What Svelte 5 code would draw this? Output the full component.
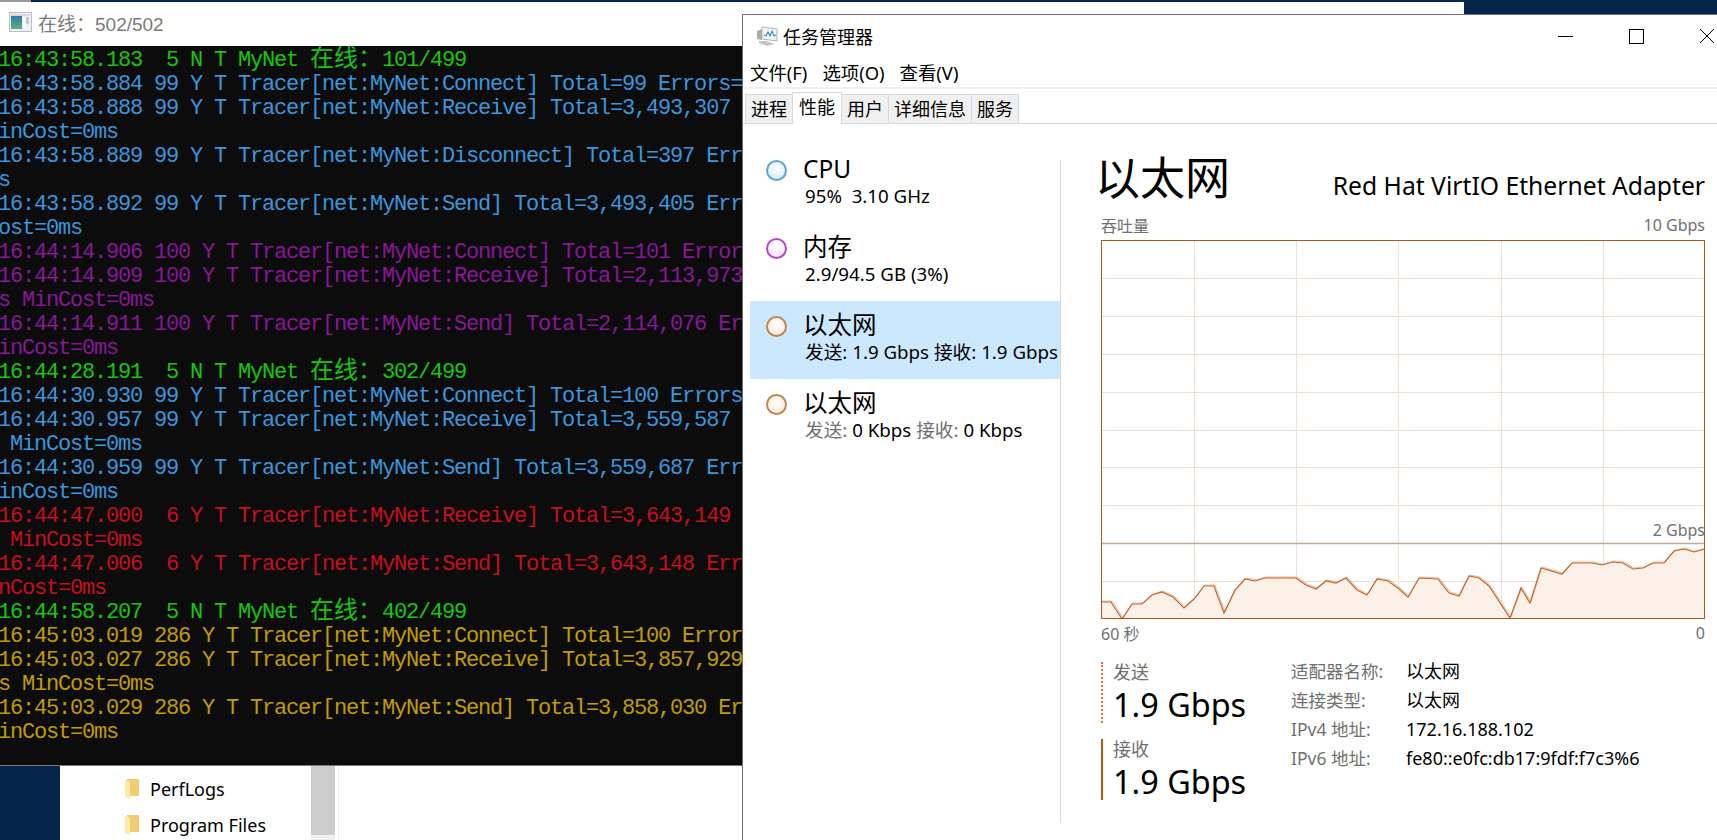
<script lang="ts">
	type Line = { c: string; t: string; cn?: string };

	const lines: Line[] = [
		{ c: 'green', t: '16:43:58.183  5 N T MyNet ', cn: '101/499' },
		{ c: 'blue', t: '16:43:58.884 99 Y T Tracer[net:MyNet:Connect] Total=99 Errors=' },
		{ c: 'blue', t: '16:43:58.888 99 Y T Tracer[net:MyNet:Receive] Total=3,493,307' },
		{ c: 'blue', t: 'inCost=0ms' },
		{ c: 'blue', t: '16:43:58.889 99 Y T Tracer[net:MyNet:Disconnect] Total=397 Err' },
		{ c: 'blue', t: 's' },
		{ c: 'blue', t: '16:43:58.892 99 Y T Tracer[net:MyNet:Send] Total=3,493,405 Err' },
		{ c: 'blue', t: 'ost=0ms' },
		{ c: 'purple', t: '16:44:14.906 100 Y T Tracer[net:MyNet:Connect] Total=101 Error' },
		{ c: 'purple', t: '16:44:14.909 100 Y T Tracer[net:MyNet:Receive] Total=2,113,973' },
		{ c: 'purple', t: 's MinCost=0ms' },
		{ c: 'purple', t: '16:44:14.911 100 Y T Tracer[net:MyNet:Send] Total=2,114,076 Er' },
		{ c: 'purple', t: 'inCost=0ms' },
		{ c: 'green', t: '16:44:28.191  5 N T MyNet ', cn: '302/499' },
		{ c: 'blue', t: '16:44:30.930 99 Y T Tracer[net:MyNet:Connect] Total=100 Errors' },
		{ c: 'blue', t: '16:44:30.957 99 Y T Tracer[net:MyNet:Receive] Total=3,559,587' },
		{ c: 'blue', t: ' MinCost=0ms' },
		{ c: 'blue', t: '16:44:30.959 99 Y T Tracer[net:MyNet:Send] Total=3,559,687 Err' },
		{ c: 'blue', t: 'inCost=0ms' },
		{ c: 'red', t: '16:44:47.000  6 Y T Tracer[net:MyNet:Receive] Total=3,643,149' },
		{ c: 'red', t: ' MinCost=0ms' },
		{ c: 'red', t: '16:44:47.006  6 Y T Tracer[net:MyNet:Send] Total=3,643,148 Err' },
		{ c: 'red', t: 'nCost=0ms' },
		{ c: 'green', t: '16:44:58.207  5 N T MyNet ', cn: '402/499' },
		{ c: 'yellow', t: '16:45:03.019 286 Y T Tracer[net:MyNet:Connect] Total=100 Error' },
		{ c: 'yellow', t: '16:45:03.027 286 Y T Tracer[net:MyNet:Receive] Total=3,857,929' },
		{ c: 'yellow', t: 's MinCost=0ms' },
		{ c: 'yellow', t: '16:45:03.029 286 Y T Tracer[net:MyNet:Send] Total=3,858,030 Er' },
		{ c: 'yellow', t: 'inCost=0ms' }
	];

	const tabs = ['进程', '性能', '用户', '详细信息', '服务'];

	const gridX = [93, 195, 297, 400, 502];
	const gridY = [38, 76, 114, 152, 190, 227, 265, 341];

	// samples read off the graph, x 0-604, y 0-379
	const samples = [
		[0, 362], [10, 362], [21, 379], [31, 364], [41, 364], [51, 355], [61, 352], [72, 357], [83, 368],
		[93, 359], [103, 346], [113, 346], [123, 373], [134, 350], [144, 339], [154, 341], [164, 338],
		[195, 338], [205, 345], [215, 349], [225, 341], [235, 343], [245, 338], [256, 350], [266, 355],
		[276, 339], [287, 341], [297, 348], [307, 357], [318, 338], [337, 339], [348, 353], [358, 356],
		[368, 336], [378, 338], [388, 346], [409, 378], [420, 348], [429, 363], [440, 328], [461, 334],
		[471, 323], [491, 323], [501, 325], [512, 322], [522, 323], [532, 329], [542, 328], [552, 323],
		[563, 323], [573, 311], [583, 309], [593, 312], [604, 309]
	];

	const line = samples.map((p) => p.join(',')).join(' ');
	const send = samples.map((p) => `${p[0] + 1},${p[1] - 1}`).join(' ');
	const area = `0,379 ${line} 604,379`;
</script>

<div class="desktop">
	<div class="strip"></div>
	<div class="console">
		<div class="con-title">
			<svg class="con-icon" width="23" height="20" viewBox="0 0 23 20">
				<defs>
					<linearGradient id="screen" x1="0" y1="0" x2="0" y2="1">
						<stop offset="0" stop-color="#2f7fa8" />
						<stop offset="1" stop-color="#5fae7c" />
					</linearGradient>
				</defs>
				<rect x="0.5" y="0.5" width="22" height="19" fill="#eef0f1" stroke="#b9bec2" />
				<rect x="2" y="4" width="11" height="13" fill="url(#screen)" />
				<rect x="2" y="2" width="19" height="2" fill="#d5d9dc" />
				<rect x="14" y="5" width="2" height="12" fill="#fff" />
				<rect x="17" y="5" width="3" height="7" fill="#c9cdd0" />
			</svg>
			<span>在线：502/502</span>
		</div>
		<div class="log">
			{#each lines as l}
				<div class="line {l.c}">{l.t}{#if l.cn}<span class="cn">在线：</span>{l.cn}{/if}</div>
			{/each}
		</div>
	</div>

	<div class="explorer">
		<div class="tree">
			<div class="folder">
				<svg width="16" height="22" viewBox="0 0 16 22"><path d="M3 1 H15 V18 H3 Z" fill="#f0cd70" /><path d="M1 2 L6 4 V21 L1 19 Z" fill="#fdeaa6" /></svg>
				<span>PerfLogs</span>
			</div>
			<div class="folder">
				<svg width="16" height="22" viewBox="0 0 16 22"><path d="M3 1 H15 V18 H3 Z" fill="#f0cd70" /><path d="M1 2 L6 4 V21 L1 19 Z" fill="#fdeaa6" /></svg>
				<span>Program Files</span>
			</div>
		</div>
		<div class="scrollbar"><div class="thumb"></div></div>
		<div class="pane"></div>
	</div>

	<div class="taskmgr">
		<div class="tm-title">
			<svg class="tm-icon" width="22" height="20" viewBox="0 0 22 20">
				<path d="M1 5 L6 3 V14 L1 13 Z" fill="#a9adb0" />
				<path d="M6 1 L21 3 V15 L6 13 Z" fill="#f2f6f9" stroke="#aab2b7" />
				<path d="M8 9 L10 10 L12 6 L14 10 L16 5 L18 10 L20 9" fill="none" stroke="#3f8fd0" stroke-width="1.2" />
				<path d="M3 15 L10 15 L19 18 L11 20 L3 17 Z" fill="#c3c6c8" />
			</svg>
			<span class="tm-name">任务管理器</span>
			<div class="controls">
				<svg width="16" height="16" viewBox="0 0 16 16"><path d="M1 8.5 H16" stroke="#000" /></svg>
				<svg width="16" height="16" viewBox="0 0 16 16"><rect x="1.5" y="1.5" width="14" height="14" fill="none" stroke="#000" /></svg>
				<svg width="16" height="16" viewBox="0 0 16 16"><path d="M1 1 L15 15 M15 1 L1 15" stroke="#000" fill="none" /></svg>
			</div>
		</div>

		<div class="menu">
			<span>文件(F)</span>
			<span>选项(O)</span>
			<span>查看(V)</span>
		</div>

		<div class="tabs">
			{#each tabs as tab}
				<div class="tab" class:active={tab === '性能'}>{tab}</div>
			{/each}
		</div>

		<div class="perf">
			<div class="side">
				<div class="item">
					<i class="dot cpu"></i>
					<div>
						<div class="item-name">CPU</div>
						<div class="item-sub">95%&nbsp; 3.10 GHz</div>
					</div>
				</div>
				<div class="item">
					<i class="dot mem"></i>
					<div>
						<div class="item-name">内存</div>
						<div class="item-sub">2.9/94.5 GB (3%)</div>
					</div>
				</div>
				<div class="item selected">
					<i class="dot net"></i>
					<div>
						<div class="item-name">以太网</div>
						<div class="item-sub">发送: 1.9 Gbps 接收: 1.9 Gbps</div>
					</div>
				</div>
				<div class="item">
					<i class="dot net"></i>
					<div>
						<div class="item-name">以太网</div>
						<div class="item-sub"><span class="muted">发送:</span> 0 Kbps <span class="muted">接收:</span> 0 Kbps</div>
					</div>
				</div>
			</div>

			<div class="divider"></div>

			<div class="main">
				<div class="head">
					<h1>以太网</h1>
					<div class="adapter">Red Hat VirtIO Ethernet Adapter</div>
				</div>
				<div class="scale">
					<span>吞吐量</span>
					<span>10 Gbps</span>
				</div>
				<div class="graph">
					<svg width="604" height="379" viewBox="0 0 604 379">
						{#each gridX as x}
							<line x1={x + 0.5} y1="0" x2={x + 0.5} y2="379" stroke="#eee0d4" />
						{/each}
						{#each gridY as y}
							<line x1="0" y1={y + 0.5} x2="604" y2={y + 0.5} stroke="#eee0d4" />
						{/each}
						<polygon points={area} fill="#fbf1e8" />
						<line x1="0" y1="303.5" x2="604" y2="303.5" stroke="#c9a68a" stroke-width="1.5" />
						<polyline points={send} fill="none" stroke="#eeb88f" />
						<polyline points={line} fill="none" stroke="#c4642e" stroke-width="1.2" />
					</svg>
					<span class="limit">2 Gbps</span>
				</div>
				<div class="scale axis">
					<span>60 秒</span>
					<span>0</span>
				</div>

				<div class="stats">
					<div class="rates">
						<div class="rate dotted">
							<div class="rate-label">发送</div>
							<div class="rate-value">1.9 Gbps</div>
						</div>
						<div class="rate solid">
							<div class="rate-label">接收</div>
							<div class="rate-value">1.9 Gbps</div>
						</div>
					</div>
					<div class="details">
						<span class="k">适配器名称:</span><span>以太网</span>
						<span class="k">连接类型:</span><span>以太网</span>
						<span class="k">IPv4 地址:</span><span>172.16.188.102</span>
						<span class="k">IPv6 地址:</span><span>fe80::e0fc:db17:9fdf:f7c3%6</span>
					</div>
				</div>
			</div>
		</div>
	</div>
</div>

<style>
	:global(body) {
		margin: 0;
		background: #05264a;
	}

	.desktop {
		position: relative;
		width: 1717px;
		height: 840px;
		overflow: hidden;
		background: #05264a;
		font-family: 'Noto Sans', 'Noto Sans CJK SC', sans-serif;
		color: #000;
	}

	.strip {
		position: absolute;
		left: 0;
		top: 0;
		width: 31px;
		height: 2px;
		background: #9a9a9a;
	}

	/* console window */
	.console {
		position: absolute;
		left: 0;
		top: 2px;
		width: 1464px;
		height: 764px;
		background: #fff;
		box-sizing: border-box;
		border-bottom: 1px solid #777;
	}

	.con-title {
		display: flex;
		align-items: center;
		gap: 6px;
		height: 44px;
		padding: 0 0 4px 9px;
		box-sizing: border-box;
		font-family: 'Liberation Sans', 'Noto Sans CJK SC', sans-serif;
		font-size: 19px;
		color: #7a7a7a;
	}

	.log {
		height: 719px;
		background: #0c0c0c;
		padding-top: 3px;
		box-sizing: border-box;
		font-family: 'Liberation Mono', 'Noto Sans CJK SC', monospace;
		font-size: 22px;
		letter-spacing: -1.2px;
		overflow: hidden;
	}

	.line {
		height: 24px;
		line-height: 24px;
		margin-left: -2px;
		white-space: pre;
	}

	.cn {
		font-family: 'Noto Sans CJK SC', sans-serif;
		font-size: 24px;
		line-height: 0;
		letter-spacing: 0;
	}

	.green { color: #16c60c; }
	.blue { color: #3a96dd; }
	.purple { color: #881798; }
	.red { color: #c50f1f; }
	.yellow { color: #c19c00; }

	/* explorer behind the console */
	.explorer {
		position: absolute;
		left: 60px;
		top: 766px;
		right: 0;
		height: 74px;
		display: flex;
		background: #fff;
	}

	.tree {
		width: 251px;
		padding: 5px 0 0 64px;
		box-sizing: border-box;
		font-size: 18px;
	}

	.folder {
		display: flex;
		align-items: center;
		gap: 10px;
		height: 36px;
	}

	.scrollbar {
		width: 24px;
		background: #f0f0f0;
	}

	.thumb {
		height: 69px;
		background: #cdcdcd;
	}

	.pane {
		margin-left: 3px;
		width: 1px;
		background: #eee;
	}

	/* task manager */
	.taskmgr {
		position: absolute;
		left: 742px;
		top: 14px;
		width: 975px;
		height: 826px;
		background: #fff;
		box-sizing: border-box;
		border: 1px solid #707070;
		border-width: 1px 0 0 1px;
	}

	.tm-title {
		display: flex;
		align-items: center;
		height: 41px;
		padding-left: 13px;
	}

	.tm-icon {
		margin-right: 5px;
	}

	.tm-name {
		font-size: 18px;
	}

	.controls {
		margin-left: auto;
		display: flex;
		gap: 55px;
		padding-right: 2px;
	}

	.menu {
		display: flex;
		align-items: center;
		gap: 15px;
		height: 31px;
		padding-left: 7px;
		font-size: 18.4px;
		border-bottom: 2px solid #f0f0f0;
		white-space: nowrap;
	}

	.tabs {
		display: flex;
		align-items: flex-end;
		height: 35px;
		padding-left: 2px;
		box-sizing: border-box;
		border-bottom: 1px solid #d9d9d9;
	}

	.tab {
		height: 29px;
		line-height: 28px;
		padding: 0 5px;
		font-size: 18px;
		background: #f0f0f0;
		border: 1px solid #d9d9d9;
		border-bottom: none;
		box-sizing: border-box;
		margin-right: -1px;
		white-space: nowrap;
	}

	.tab.active {
		height: 32px;
		line-height: 29px;
		background: #fff;
		margin-bottom: -1px;
		padding: 0 6px;
		position: relative;
	}

	.perf {
		display: flex;
		height: 702px;
	}

	.side {
		width: 310px;
		margin-left: 7px;
		padding-top: 21px;
	}

	.item {
		display: flex;
		align-items: flex-start;
		height: 78px;
		padding: 9px 0 0 16px;
		box-sizing: border-box;
		white-space: nowrap;
	}

	.item.selected {
		background: #cce8ff;
	}

	.item-name {
		font-size: 24.5px;
		line-height: 30px;
	}

	.item-sub {
		font-size: 18.7px;
		line-height: 24px;
		margin-left: 2px;
	}

	.muted {
		color: #707070;
	}

	.dot {
		display: block;
		width: 21px;
		height: 21px;
		margin: 6px 16px 0 0;
		border-radius: 50%;
		box-sizing: border-box;
		border: 2px solid;
		flex: none;
	}

	.dot.cpu {
		border-color: #5fa5d2;
		background: radial-gradient(circle at 50% 35%, #fff, #d3e6f2);
	}

	.dot.mem {
		border-color: #a94fc9;
		background: radial-gradient(circle at 50% 35%, #fff, #f1dcf8);
	}

	.dot.net {
		border-color: #c0864f;
		background: radial-gradient(circle at 50% 35%, #fff, #fbe6d4);
	}

	.divider {
		width: 1px;
		margin: 36px 0 3px;
		background: #d9d9d9;
	}

	.main {
		width: 604px;
		margin-left: 40px;
	}

	.head {
		display: flex;
		align-items: flex-end;
		justify-content: space-between;
		height: 76px;
		margin-top: 13px;
		white-space: nowrap;
	}

	h1 {
		margin: 0 0 5px -6px;
		font-size: 45px;
		font-weight: 400;
		line-height: 60px;
	}

	.adapter {
		font-size: 24.7px;
		line-height: 34px;
		margin-bottom: 10px;
	}

	.scale {
		display: flex;
		justify-content: space-between;
		align-items: center;
		height: 24px;
		font-size: 16px;
		color: #707070;
	}

	.graph {
		position: relative;
		width: 604px;
		height: 379px;
		outline: 1px solid #a85b1c;
		outline-offset: -1px;
		box-sizing: border-box;
		margin-top: 3px;
	}

	.graph svg {
		display: block;
	}

	.limit {
		position: absolute;
		right: 0;
		top: 280px;
		font-size: 16px;
		line-height: 20px;
		color: #707070;
	}

	.axis {
		margin-top: 2px;
	}

	.stats {
		display: flex;
		margin-top: 17px;
	}

	.rates {
		width: 190px;
	}

	.rate {
		height: 61px;
		margin-bottom: 16px;
		padding-left: 10px;
	}

	.rate.dotted {
		border-left: 2px dotted #e8703a;
	}

	.rate.solid {
		border-left: 2px solid #b85a10;
	}

	.rate-label {
		font-size: 18px;
		line-height: 20px;
		color: #707070;
	}

	.rate-value {
		font-size: 32.4px;
		line-height: 44px;
		white-space: nowrap;
	}

	.details {
		display: grid;
		grid-template-columns: 115px auto;
		grid-auto-rows: 29px;
		align-items: center;
		align-content: start;
		margin-top: -6px;
		font-size: 18px;
		line-height: 20px;
		white-space: nowrap;
	}

	.k {
		color: #707070;
		font-size: 17.5px;
	}
</style>
